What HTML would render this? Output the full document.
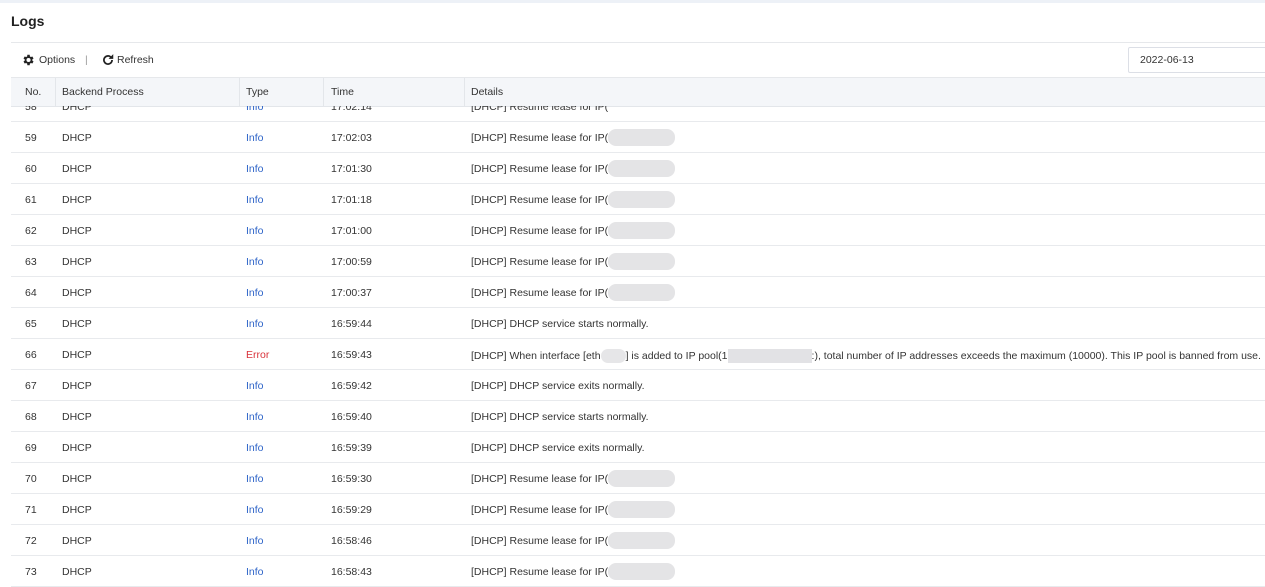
<!DOCTYPE html><html><head><style>
body{margin:0;width:1265px;height:586px;overflow:hidden;background:#fff;font-family:"Liberation Sans",Arial,sans-serif;font-size:10.5px;color:#333;position:relative}
.top{position:absolute;left:0;top:0;width:1265px;height:3px;background:#edf1f7}
.title{position:absolute;left:11px;top:13px;font-size:14px;font-weight:bold;color:#222}
.hl{position:absolute;left:11px;right:0;top:42px;height:1px;background:#e6e8eb}
.tb{position:absolute;top:54px;font-size:10.5px;color:#333}
.date{position:absolute;left:1128px;top:47px;width:140px;height:26px;border:1px solid #dcdfe6;box-sizing:border-box;padding-left:11px;line-height:24px;border-radius:2px}
.head{position:absolute;left:11px;right:0;top:77px;height:28px;background:#f4f6f9;border-top:1px solid #e6e8eb;border-bottom:1px solid #e3e6ea}
.c{position:absolute;white-space:nowrap}
.sep{position:absolute;top:0;width:1px;height:28px;background:#e3e6ea}
.row{position:absolute;left:11px;right:0;height:31px;border-bottom:1px solid #e8eaed;box-sizing:border-box}
.row .c{top:10px}
.info{color:#2e64c8}.err{color:#d9323a}
.blur{position:absolute;height:17px;top:7px;background:#e4e4e6;border-radius:8px}
</style></head><body>
<div class="top"></div>
<div class="title">Logs</div>
<div class="hl"></div>
<svg style="position:absolute;left:21px;top:53px" width="14" height="14" viewBox="0 0 24 24"><path fill="#222" d="M19.4 13a7.5 7.5 0 000-2l2.1-1.6-2-3.5-2.5 1a7.6 7.6 0 00-1.7-1L14.9 3h-4l-.4 2.9a7.6 7.6 0 00-1.7 1l-2.5-1-2 3.5L6.4 11a7.5 7.5 0 000 2l-2.1 1.6 2 3.5 2.5-1a7.6 7.6 0 001.7 1l.4 2.9h4l.4-2.9a7.6 7.6 0 001.7-1l2.5 1 2-3.5zM12.9 15.5a3.5 3.5 0 110-7 3.5 3.5 0 010 7z"/></svg>
<div class="tb" style="left:39px">Options</div>
<div class="tb" style="left:85px;color:#999">|</div>
<svg style="position:absolute;left:101px;top:53px" width="14" height="14" viewBox="0 0 24 24"><path fill="none" stroke="#222" stroke-width="3" d="M19 12a7 7 0 11-2.1-5"/><path fill="#222" d="M21 2v8h-8z"/></svg>
<div class="tb" style="left:117px">Refresh</div>
<div class="date">2022-06-13</div>
<div class="head">
<div class="c" style="left:14px;top:8px">No.</div><div class="sep" style="left:44px"></div>
<div class="c" style="left:51px;top:8px">Backend Process</div><div class="sep" style="left:228px"></div>
<div class="c" style="left:235px;top:8px">Type</div><div class="sep" style="left:312px"></div>
<div class="c" style="left:320px;top:8px">Time</div><div class="sep" style="left:453px"></div>
<div class="c" style="left:460px;top:8px">Details</div>
</div>
<div id="rows"></div>
<div class="row" style="top:106px;height:16px;overflow:hidden"><div class="c" style="left:14px;top:-5px">58</div><div class="c" style="left:51px;top:-5px">DHCP</div><div class="c info" style="left:235px;top:-5px">Info</div><div class="c" style="left:320px;top:-5px">17:02:14</div><div class="c" style="left:460px;top:-5px">[DHCP] Resume lease for IP(</div></div>
<script>
var d=[[59,"Info","17:02:03","r"],[60,"Info","17:01:30","r"],[61,"Info","17:01:18","r"],[62,"Info","17:01:00","r"],[63,"Info","17:00:59","r"],[64,"Info","17:00:37","r"],[65,"Info","16:59:44","[DHCP] DHCP service starts normally."],[66,"Error","16:59:43","e"],[67,"Info","16:59:42","[DHCP] DHCP service exits normally."],[68,"Info","16:59:40","[DHCP] DHCP service starts normally."],[69,"Info","16:59:39","[DHCP] DHCP service exits normally."],[70,"Info","16:59:30","r"],[71,"Info","16:59:29","r"],[72,"Info","16:58:46","r"],[73,"Info","16:58:43","r"]];
var h="";d.forEach(function(r,i){var t=122+i*31;var det=r[3];
if(det=="r")det='[DHCP] Resume lease for IP(</div><div class="blur" style="left:597px;width:67px">';
else if(det=="e")det='[DHCP] When interface [eth<span style="display:inline-block;width:25px;height:14px;background:#e6e6e8;border-radius:7px;vertical-align:middle"></span>] is added to IP pool(1<span style="display:inline-block;width:84px;height:14px;background:#e2e2e5;vertical-align:middle"></span>:), total number of IP addresses exceeds the maximum (10000). This IP pool is banned from use.';
h+='<div class="row" style="top:'+t+'px"><div class="c" style="left:14px">'+r[0]+'</div><div class="c" style="left:51px">DHCP</div><div class="c '+(r[1]=="Error"?"err":"info")+'" style="left:235px">'+r[1]+'</div><div class="c" style="left:320px">'+r[2]+'</div><div class="c" style="left:460px">'+det+'</div></div>';});
document.getElementById("rows").innerHTML=h;
</script>
</body></html>
